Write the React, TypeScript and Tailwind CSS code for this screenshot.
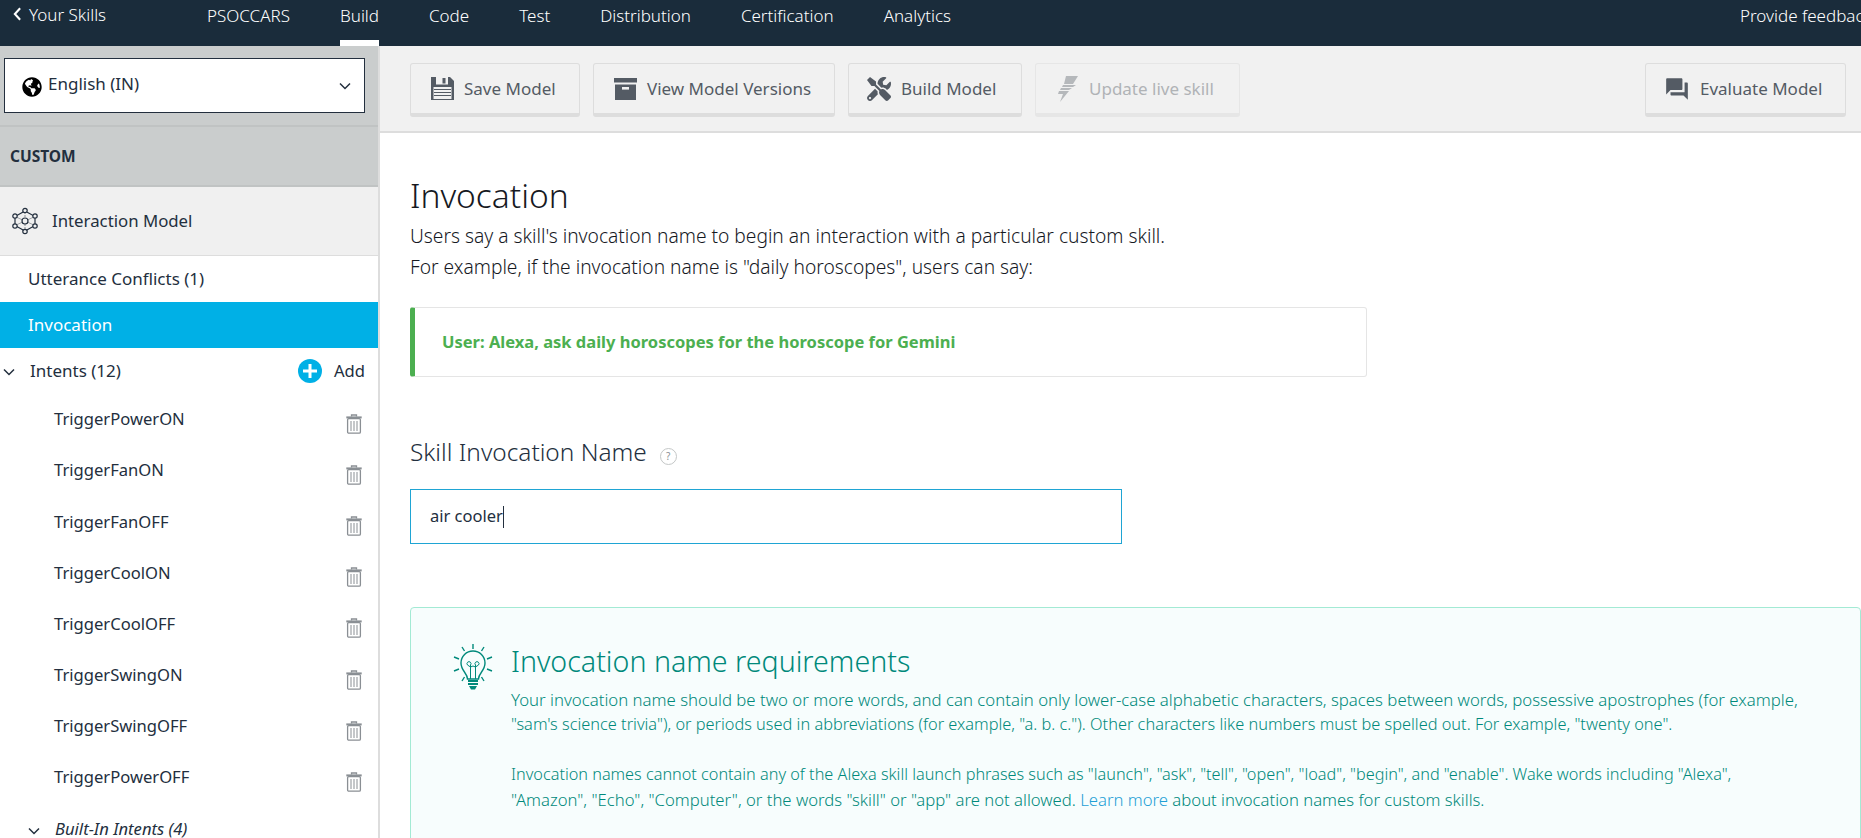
import React from "react";
import { FaGlobeAmericas, FaTools } from "react-icons/fa";
import { MdForum } from "react-icons/md";

const Chevron = ({ className = "" }: { className?: string }) => (
  <svg viewBox="0 0 12 8" className={className} fill="none" stroke="#232f3e" strokeWidth="1.5">
    <path d="M1 1.5l5 5 5-5" />
  </svg>
);

const Trash = () => (
  <svg viewBox="0 0 16 20" className="w-4 h-5 shrink-0 mt-1">
    <g fill="none" stroke="#8a8f94" strokeWidth="1.3">
      <path d="M5.5 2.6V1h5v1.6" />
      <rect x="1.6" y="4.6" width="12.8" height="14.6" rx="1.2" fill="#fff" />
      <path d="M0.3 3.4h15.4" strokeWidth="2" />
      <path d="M5 7v10M8 7v10M11 7v10" strokeWidth="1" />
    </g>
  </svg>
);

const Floppy = () => (
  <svg viewBox="0 0 23 23" className="w-[23px] h-[23px] shrink-0">
    <path fill="#545b64" d="M0 0h19l4 4v19H0z" />
    <rect x="5" y="0" width="12" height="7.5" fill="#f1f1f1" />
    <rect x="11.5" y="1" width="3" height="5.5" fill="#545b64" />
    <rect x="2.5" y="10" width="18" height="12" fill="#f1f1f1" />
    <path stroke="#545b64" strokeWidth="1" d="M3 12.5h17M3 15.5h17M3 18.5h17" />
  </svg>
);

const Archive = () => (
  <svg viewBox="0 0 23 23" className="w-[23px] h-[23px] shrink-0">
    <rect x="0" y="1" width="23" height="4.5" fill="#545b64" />
    <path fill="#545b64" d="M1 7.5h21V23H1z" />
    <rect x="8" y="10" width="7" height="2.6" fill="#f1f1f1" />
  </svg>
);

const Bolt = () => (
  <svg viewBox="0 0 23 26" className="w-[23px] h-[26px] shrink-0" fill="#b5b8bb">
    <path d="M10 0h12L17 8h-9z" />
    <path d="M7 9h13l-3 2H6z" />
    <path d="M5 12h11l-3 2H4z" />
    <path d="M3 15h10L4 26l3-8H2z" />
  </svg>
);

const NetworkIcon = () => (
  <svg viewBox="0 0 26 28" className="w-[26px] h-7 shrink-0" fill="none" stroke="#232f3e" strokeWidth="1.2">
    <path d="M13 4L23 9.5v9L13 24 3 18.500V9.500z" />
    <path d="M13 5v18" stroke="#8a8f94" strokeWidth="1" strokeDasharray="2 1" />
    <path d="M3 9.500l20 9M23 9.500l-20 9" stroke="#8a8f94" strokeWidth="0.800" />
    <g fill="#f0f0f0">
      <circle cx="13" cy="14" r="3" />
      <circle cx="13" cy="3.500" r="2.200" />
      <circle cx="13" cy="24.500" r="2.200" />
      <circle cx="3" cy="9" r="2.200" />
      <circle cx="23" cy="9" r="2.200" />
      <circle cx="3" cy="19" r="2.200" />
      <circle cx="23" cy="19" r="2.200" />
    </g>
  </svg>
);

const Bulb = () => (
  <svg viewBox="0 0 40 46" className="w-10 h-[46px] shrink-0" fill="none" stroke="#00897b" strokeWidth="1.4">
    <path d="M20 0v5M9 3l2.500 4M31 3l-2.500 4M1 13l5 2M39 13l-5 2M1 27l5-2M39 27l-5-2M9 37l2.500-4M31 37l-2.500-4" />
    <path d="M14.500 35c0-6-6.500-8-6.500-16a12 12 0 0 1 24 0c0 8-6.500 10-6.500 16z" />
    <path d="M17.500 35V21a2 2 0 1 0-3 0l3 2 2.500-1 2.500 1 3-2a2 2 0 1 0-3 0v14" strokeWidth="1" />
    <path d="M15 36h10v2h-10zM15 39h10v2h-10zM16 42h8l-2 3.500h-4z" fill="#00897b" stroke="none" />
  </svg>
);

const ToolButton = ({ width, icon, label, disabled }: { width: string; icon: React.ReactNode; label: string; disabled?: boolean }) => (
  <div
    className={`${width} h-[54px] shrink-0 flex items-center gap-[10px] pl-5 rounded-[3px] border border-b-4 bg-[#f1f1f1] text-[17px] font-normal whitespace-nowrap ${
      disabled ? "border-[#e6e6e6] text-[#b0b3b6]" : "border-[#dddddd] text-[#545b64]"
    }`}
  >
    {icon}
    <span>{label}</span>
  </div>
);

const intents = [
  "TriggerPowerON",
  "TriggerFanON",
  "TriggerFanOFF",
  "TriggerCoolON",
  "TriggerCoolOFF",
  "TriggerSwingON",
  "TriggerSwingOFF",
  "TriggerPowerOFF",
];

export default function App() {
  return (
    <div className="w-[1861px] h-[838px] overflow-hidden flex flex-col bg-white text-[#232f3e] font-['Noto_Sans',sans-serif]">
      <header className="h-[46px] shrink-0 bg-[#1a2c3b] flex text-white text-[17px] overflow-hidden whitespace-nowrap font-light">
        <div className="w-[207px] shrink-0 flex items-start pl-[13px] pt-[2px] gap-[7px]">
          <svg viewBox="0 0 10 16" className="w-[9px] h-[14px] mt-[5px]" fill="none" stroke="#fff" strokeWidth="2.400">
            <path d="M8 1.500L2 8l6 6.500" />
          </svg>
          <span>Your Skills</span>
        </div>
        <nav className="flex gap-[50px] h-full">
          {["PSOCCARS", "Build", "Code", "Test", "Distribution", "Certification", "Analytics"].map((n) => (
            <div key={n} className={`pt-[3px] h-full ${n === "Build" ? "border-b-[6px] border-white" : ""}`}>
              {n}
            </div>
          ))}
        </nav>
        <div className="ml-[789px] pt-[3px] shrink-0">Provide feedback</div>
      </header>

      <div className="flex flex-1 min-h-0">
        <aside className="w-[380px] shrink-0 border-r-2 border-[#dddddd] flex flex-col text-[16.6px] overflow-hidden">
          <div className="h-[81px] shrink-0 bg-[#cacdcd] pt-3 pl-1 border-b-2 border-[#c0c3c3]">
            <div className="w-[361px] h-[55px] border border-[#232f3e] bg-white flex items-center pl-[17px] pr-[13px] gap-[6px] text-[17px]">
              <FaGlobeAmericas className="w-5 h-5 mt-[2px] text-black shrink-0" />
              <span className="mb-[4px]">English (IN)</span>
              <Chevron className="w-[12px] h-2 ml-auto" />
            </div>
          </div>
          <div className="h-[60px] shrink-0 bg-[#cacdcd] flex items-center pl-[10px] pt-[2px] font-bold text-[15.5px] border-b-2 border-[#c0c3c3]">CUSTOM</div>
          <div className="h-[69px] shrink-0 bg-[#f0f0f0] flex items-center pl-3 gap-[14px] border-b border-[#dddddd] text-[16.8px]">
            <NetworkIcon />
            <span>Interaction Model</span>
          </div>
          <div className="h-[46px] shrink-0 flex items-center pl-[28px] text-[17px]">Utterance Conflicts (1)</div>
          <div className="h-[46px] shrink-0 bg-[#00b0e6] flex items-center pl-[28px] text-white text-[17px]">Invocation</div>
          <div className="h-[46px] shrink-0 flex items-center pl-[3px] pr-[13px]">
            <Chevron className="w-[12px] h-2 mt-[2px]" />
            <span className="ml-[15px] text-[17px]">Intents (12)</span>
            <svg viewBox="0 0 24 24" className="w-[24px] h-[24px] ml-auto">
              <circle cx="12" cy="12" r="12" fill="#00b0e6" />
              <path d="M12 5v14M5 12h14" stroke="#fff" strokeWidth="3" />
            </svg>
            <span className="ml-[12px]">Add</span>
          </div>
          <div className="flex flex-col pt-[2px]">
            {intents.map((i) => (
              <div key={i} className="h-[51.2px] shrink-0 flex items-center justify-between pl-[54px] pr-4">
                <span className="-mt-1">{i}</span>
                <Trash />
              </div>
            ))}
          </div>
          <div className="flex items-center pl-[28px] italic gap-[15px] mt-[11px]">
            <Chevron className="w-[12px] h-2 mt-1" />
            <span>Built-In Intents (4)</span>
          </div>
        </aside>

        <main className="flex-1 min-w-0 flex flex-col overflow-hidden">
          <div className="h-[87px] shrink-0 bg-[#f1f1f1] border-b-2 border-[#dddddd] flex pt-[17px] pl-[30px] pr-[15px] gap-[13px]">
            <ToolButton width="w-[170px]" icon={<Floppy />} label="Save Model" />
            <ToolButton width="w-[242px]" icon={<Archive />} label="View Model Versions" />
            <ToolButton width="w-[174px]" icon={<FaTools className="w-6 h-6 shrink-0 text-[#545b64] -ml-[2px]" />} label="Build Model" />
            <ToolButton width="w-[205px]" icon={<Bolt />} label="Update live skill" disabled />
            <div className="ml-auto">
              <ToolButton width="w-[201px]" icon={<MdForum className="w-[26px] h-[28px] shrink-0 text-[#545b64] -ml-[2px]" />} label="Evaluate Model" />
            </div>
          </div>

          <div className="pl-[30px] pt-[42px] flex flex-col">
            <h1 className="text-[33.5px] leading-10 font-light mb-[5px] text-[#16191f] whitespace-nowrap">Invocation</h1>
            <p className="text-[19.2px] leading-[31px] font-light whitespace-nowrap text-[#16191f]">
              Users say a skill's invocation name to begin an interaction with a particular custom skill.
              <br />
              For example, if the invocation name is "daily horoscopes", users can say:
            </p>
            <div className="mt-[25px] w-[957px] h-[70px] shrink-0 border border-l-[5px] border-[#e5e5e5] border-l-[#4caf50] rounded-[3px] flex items-center pl-[27px] text-[#4caf50] font-bold text-[16.5px]">
              User: Alexa, ask daily horoscopes for the horoscope for Gemini
            </div>
            <div className="mt-[59px] flex items-center h-8 gap-[13px]">
              <span className="text-[24.4px] font-light">Skill Invocation Name</span>
              <span className="w-[17px] h-[17px] mt-2 rounded-full border border-[#c4c7c7] flex items-center justify-center text-[10px] text-[#8a8f94]">?</span>
            </div>
            <div className="mt-[21px] w-[712px] h-[55px] shrink-0 border border-[#1fa5d4] flex items-center pl-[19px] text-[16.5px]">
              <span>air cooler</span>
              <span className="w-px h-[22px] bg-[#232f3e]"></span>
            </div>
            <div className="mt-[63px] w-[1451px] h-[300px] shrink-0 border border-[#a3ead4] bg-[#f7fdfd] rounded-[4px] flex pl-[42px] pt-[36px] gap-[18px] text-[#00897b]">
              <Bulb />
              <div className="-mt-px">
                <h2 className="text-[28.6px] leading-9 font-light mb-2">Invocation name requirements</h2>
                <div className="leading-[25px] font-light whitespace-nowrap">
                  <p className="text-[16.8px]">
                    Your invocation name should be two or more words, and can contain only lower-case alphabetic characters, spaces between words, possessive apostrophes (for example,
                  </p>
                  <p className="text-[16.35px]">
                    "sam's science trivia"), or periods used in abbreviations (for example, "a. b. c."). Other characters like numbers must be spelled out. For example, "twenty one".
                  </p>
                  <p className="text-[16.25px] mt-[25px]">
                    Invocation names cannot contain any of the Alexa skill launch phrases such as "launch", "ask", "tell", "open", "load", "begin", and "enable". Wake words including "Alexa",
                  </p>
                  <p className="text-[16.7px]">
                    "Amazon", "Echo", "Computer", or the words "skill" or "app" are not allowed. <span className="text-[#1f9fd6]">Learn more</span> about invocation names for custom skills.
                  </p>
                </div>
              </div>
            </div>
          </div>
        </main>
      </div>
    </div>
  );
}
